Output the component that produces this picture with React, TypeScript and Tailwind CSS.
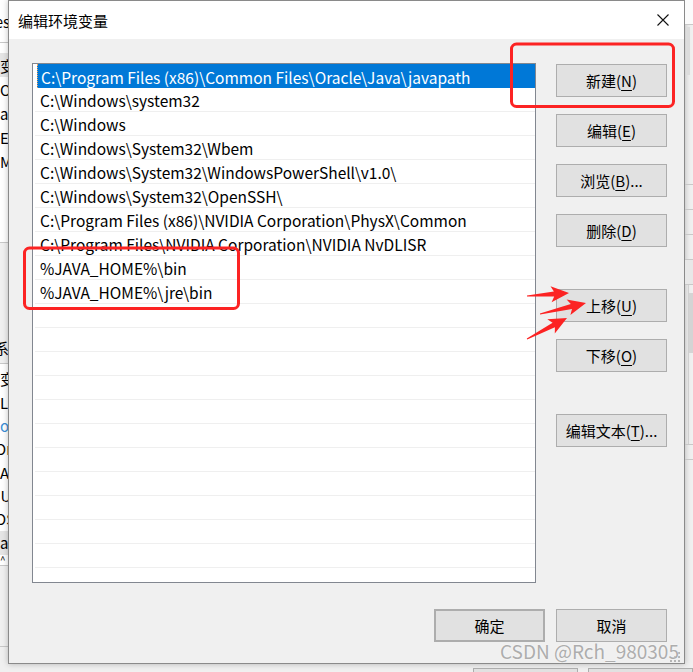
import React from "react";

const rows = [
  "C:\\Program Files (x86)\\Common Files\\Oracle\\Java\\javapath",
  "C:\\Windows\\system32",
  "C:\\Windows",
  "C:\\Windows\\System32\\Wbem",
  "C:\\Windows\\System32\\WindowsPowerShell\\v1.0\\",
  "C:\\Windows\\System32\\OpenSSH\\",
  "C:\\Program Files (x86)\\NVIDIA Corporation\\PhysX\\Common",
  "C:\\Program Files\\NVIDIA Corporation\\NVIDIA NvDLISR",
  "%JAVA_HOME%\\bin",
  "%JAVA_HOME%\\jre\\bin",
];

function Btn({
  label,
  k,
  suffix = "",
  className = "",
}: {
  label: string;
  k?: string;
  suffix?: string;
  className?: string;
}) {
  return (
    <div
      className={`h-[33px] w-[111px] shrink-0 border border-[#adadad] bg-[#e1e1e1] flex items-center justify-center text-[15px] leading-none text-black ${className}`}
    >
      <span>
        {label}
        {k ? (
          <>
            (<span className="underline underline-offset-[3px] decoration-1">{k}</span>)
          </>
        ) : null}
        {suffix}
      </span>
    </div>
  );
}

function arrowPoints(tx: number, ty: number, px: number, py: number) {
  const dx = px - tx;
  const dy = py - ty;
  const len = Math.hypot(dx, dy);
  const ux = dx / len;
  const uy = dy / len;
  const nx = -uy;
  const ny = ux;
  const headLen = 15;
  const headW = 8;
  const shaftW = 2.5;
  const bx = px - ux * headLen;
  const by = py - uy * headLen;
  const bx2 = px - ux * (headLen + 3);
  const by2 = py - uy * (headLen + 3);
  const pts = [
    [tx + nx * 0.4, ty + ny * 0.4],
    [bx + nx * shaftW, by + ny * shaftW],
    [bx2 + nx * headW, by2 + ny * headW],
    [px, py],
    [bx2 - nx * headW, by2 - ny * headW],
    [bx - nx * shaftW, by - ny * shaftW],
    [tx - nx * 0.4, ty - ny * 0.4],
  ];
  return pts.map((p) => `${p[0].toFixed(1)},${p[1].toFixed(1)}`).join(" ");
}

export default function App() {
  const emptyCount = 13;
  return (
    <div className="relative w-[693px] h-[672px] overflow-hidden bg-[#f0f0f0] flex flex-col font-['Microsoft_YaHei_UI','Noto_Sans_CJK_SC',sans-serif] text-black">
      <div className="flex h-[664px] shrink-0">
        {/* background window, left strip */}
        <div className="w-[8px] shrink-0 flex flex-col overflow-hidden text-[15px] leading-none">
          <div className="h-[43px] bg-white border-b border-[#c8c8c8] flex items-center justify-end whitespace-nowrap">
            <span className="mr-[-2px]">es</span>
          </div>
          <div className="h-[200px] bg-white border-b border-[#c8c8c8] flex flex-col pt-[10px] whitespace-nowrap">
            <div className="h-[24px] bg-[#e5e5e5] flex items-center">变量</div>
            <div className="h-[24px] flex items-center">Or</div>
            <div className="h-[24px] flex items-center">a</div>
            <div className="h-[24px] flex items-center">E</div>
            <div className="h-[24px] flex items-center">M</div>
          </div>
          <div className="h-[121px] flex flex-col justify-end border-b border-[#c8c8c8] whitespace-nowrap">
            <div className="h-[32px] flex items-center ml-[-6px]">系统</div>
          </div>
          <div className="h-[202px] bg-white border-b border-[#c8c8c8] flex flex-col pt-[3px] whitespace-nowrap">
            <div className="h-[24px] flex items-center">变量</div>
            <div className="h-[24px] flex items-center">L</div>
            <div className="h-[24px] flex items-center text-[#3b8ed6]">o</div>
            <div className="h-[24px] flex items-center ml-[-5px]">Or</div>
            <div className="h-[24px] flex items-center">A</div>
            <div className="h-[24px] flex items-center ml-[-4px]">IU</div>
            <div className="h-[24px] flex items-center ml-[-5px]">OS</div>
            <div className="h-[25px] bg-[#e5e5e5] flex items-center">a</div>
            <div className="h-[10px] text-[10px] flex items-start">^</div>
          </div>
          <div className="h-[81px] border-b border-[#c8c8c8]"></div>
          <div className="flex-1"></div>
        </div>

        {/* dialog */}
        <div className="w-[677px] h-full shrink-0 border border-[#8a8a8a] bg-[#f0f0f0] flex flex-col shadow-[0_0_6px_rgba(0,0,0,0.25)]">
          {/* title bar */}
          <div className="h-[38px] shrink-0 bg-white flex items-center justify-between pl-[9px] pr-[15px]">
            <span className="text-[15px] leading-none">编辑环境变量</span>
            <svg width="12" height="12" viewBox="0 0 12 12">
              <path d="M0.5 0.5 L11.5 11.5 M11.5 0.5 L0.5 11.5" stroke="#111" strokeWidth="1.1" fill="none" />
            </svg>
          </div>

          {/* body */}
          <div className="flex-1 flex flex-col pt-[24px] pl-[23px] pr-[17px] pb-[21px]">
            <div className="flex gap-[20px] h-[520px] shrink-0">
              {/* list */}
              <div className="w-[504px] h-full border border-[#828790] bg-white overflow-hidden flex flex-col">
                {rows.map((r, i) =>
                  i === 0 ? (
                    <div
                      key={i}
                      className="h-[24px] shrink-0 ml-[4px] bg-[#0078d7] text-white flex items-center pl-[3px] text-[15.5px] leading-none whitespace-nowrap border-l border-dotted border-[#f3a35a]"
                    >
                      <span className="mt-[3px]">{r}</span>
                    </div>
                  ) : (
                    <div
                      key={i}
                      className="h-[24px] shrink-0 ml-[2px] border-b border-[#efefef] flex items-center pl-[5px] text-[15.5px] leading-none whitespace-nowrap"
                    >
                      <span className="mt-[2px]">{r}</span>
                    </div>
                  )
                )}
                {Array.from({ length: emptyCount }).map((_, i) => (
                  <div key={"e" + i} className="h-[24px] shrink-0 ml-[2px] border-b border-[#efefef]"></div>
                ))}
              </div>

              {/* right buttons */}
              <div className="w-[111px] flex flex-col pt-[1px]">
                <Btn label="新建" k="N" />
                <Btn label="编辑" k="E" className="mt-[17px]" />
                <Btn label="浏览" k="B" suffix="..." className="mt-[17px]" />
                <Btn label="删除" k="D" className="mt-[17px]" />
                <Btn label="上移" k="U" className="mt-[42px]" />
                <Btn label="下移" k="O" className="mt-[17px]" />
                <Btn label="编辑文本" k="T" suffix="..." className="mt-[42px]" />
              </div>
            </div>

            <div className="mt-[26px] flex justify-end gap-[11px]">
              <Btn label="确定" className="border-2 border-[#0078d7]" />
              <Btn label="取消" />
            </div>
          </div>
        </div>

        {/* background window, right strip */}
        <div className="flex-1 flex flex-col overflow-hidden">
          <div className="h-[25px] bg-[#fbfbfb] border-b border-[#c8c8c8]"></div>
          <div className="h-[50px] flex">
            <div className="w-[2px]"></div>
            <div className="w-[3px] bg-[#dcdcdc] mt-[2px]"></div>
          </div>
          <div className="h-[110px] border-b border-[#c8c8c8]"></div>
          <div className="h-[25px] border-b border-[#c8c8c8]"></div>
          <div className="h-[25px] border-b border-[#c8c8c8]"></div>
          <div className="h-[25px] border-b border-[#c8c8c8]"></div>
          <div className="h-[25px] border-b border-[#c8c8c8] bg-[#e8e8e8]"></div>
          <div className="h-[160px] border-b border-[#c8c8c8] flex">
            <div className="w-[4px] border-r border-[#d0d0d0]"></div>
            <div className="flex-1 flex flex-col pt-[8px]">
              <div className="h-[60px] bg-[#d4d4d4]"></div>
            </div>
          </div>
          <div className="h-[15px] border-b border-[#c8c8c8]"></div>
          <div className="flex-1"></div>
        </div>
      </div>

      {/* background window, bottom strip */}
      <div className="flex-1 flex items-start pl-[473px] gap-[10px] pt-[4px]">
        <div className="w-[110px] h-[20px] border border-[#adadad] bg-[#e1e1e1]"></div>
        <div className="w-[110px] h-[20px] border border-[#adadad] bg-[#e1e1e1]"></div>
      </div>

      {/* annotations over the screenshot */}
      <svg className="absolute left-0 top-0 pointer-events-none" width="693" height="672" viewBox="0 0 693 672">
        <rect x="511.5" y="44" width="162" height="62.5" rx="5" ry="5" fill="none" stroke="#fc2323" strokeWidth="3" />
        <rect x="24.5" y="248" width="214" height="60.5" rx="5" ry="5" fill="none" stroke="#fc2323" strokeWidth="3" />
        <polygon points={arrowPoints(527, 296, 569, 293)} fill="#fc2323" />
        <polygon points={arrowPoints(540, 314, 586, 303)} fill="#fc2323" />
        <polygon points={arrowPoints(527, 339, 567, 318)} fill="#fc2323" />
        {/* resize grip */}
        <g fill="#b4b4b4">
          <rect x="678" y="652" width="2" height="2" />
          <rect x="674" y="656" width="2" height="2" />
          <rect x="678" y="656" width="2" height="2" />
          <rect x="670" y="660" width="2" height="2" />
          <rect x="674" y="660" width="2" height="2" />
          <rect x="678" y="660" width="2" height="2" />
        </g>
      </svg>

      {/* watermark */}
      <div className="absolute left-[500px] top-[641px] text-[19px] leading-none whitespace-nowrap text-[#adadad] font-['Noto_Sans_CJK_SC',sans-serif] [text-shadow:0_0_2px_rgba(255,255,255,0.9)] pointer-events-none">
        CSDN @Rch_980305
      </div>
    </div>
  );
}
